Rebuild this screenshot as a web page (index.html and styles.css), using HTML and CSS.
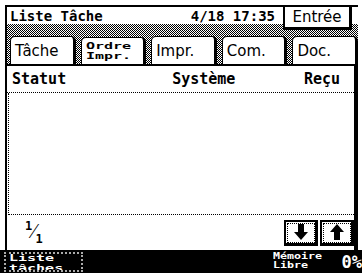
FILE: index.html
```html
<!DOCTYPE html>
<html lang="fr">
  <head>
    <meta charset="UTF-8" />
    <title>Liste Tâche</title>
    <link rel="stylesheet" href="styles.css">
  </head>
  <body>
    <div class="screen">
      <div class="title-bar">
        <span class="title">Liste Tâche</span>
        <span class="clock">4/18 17:35</span>
        <button class="enter-btn">Entrée</button>
      </div>

      <div class="tab-strip">
        <div class="tab">Tâche</div>
        <div class="tab tab-small"><span class="squash">Ordre<br />Impr.</span></div>
        <div class="tab">Impr.</div>
        <div class="tab">Com.</div>
        <div class="tab">Doc.</div>
      </div>

      <div class="panel">
        <div class="list-head">
          <span class="col-status">Statut</span>
          <span class="col-system">Système</span>
          <span class="col-recv">Reçu</span>
        </div>
        <div class="list-body"></div>
        <div class="pager">
          <span class="page-frac"><sup>1</sup>&frasl;<sub>1</sub></span>
          <div class="arrows">
            <button class="arrow-btn">
              <svg width="14" height="16" viewBox="0 0 14 16">
                <path d="M4 0h6v8h4l-7 8l-7-8h4z" fill="#000" />
              </svg>
            </button>
            <button class="arrow-btn">
              <svg width="14" height="16" viewBox="0 0 14 16">
                <path d="M4 16h6v-8h4l-7-8l-7 8h4z" fill="#000" />
              </svg>
            </button>
          </div>
        </div>
      </div>

      <div class="status-bar">
        <button class="jobs-btn"><span class="squash">Liste<br />tâches</span></button>
        <span class="mem-label"><span class="squash">Mémoire<br />Libre</span></span>
        <span class="mem-value">0%</span>
      </div>
    </div>
  </body>
</html>
```

FILE: styles.css
```css
body {
  margin: 0;
  background-color: #fff;
  color: #000;
  font-family: "DejaVu Sans Mono", monospace;
}
.screen {
  width: 362px;
  height: 273px;
  display: flex;
  flex-direction: column;
  overflow: hidden;
}
.title-bar {
  margin: 5px 4px 0 5px;
  height: 17px;
  border-top: 2px solid #000;
  border-left: 2px solid #000;
  display: flex;
  align-items: center;
  position: relative;
}
.title {
  margin-left: 3px;
  font-size: 14px;
  font-weight: bold;
}
.clock {
  margin-left: auto;
  margin-right: 83px;
  font-size: 14px;
  font-weight: bold;
}
.enter-btn {
  position: absolute;
  right: 6px;
  top: -2px;
  width: 69px;
  height: 25px;
  border: 2px solid #000;
  border-right-width: 3px;
  border-bottom-width: 3px;
  background-color: #fff;
  font-family: "DejaVu Sans", sans-serif;
  font-size: 15px;
  padding: 0;
  z-index: 1;
}
.tab-strip {
  margin: 0 4px 0 5px;
  height: 40px;
  border-left: 2px solid #000;
  display: flex;
  align-items: flex-end;
  gap: 5px;
  padding-left: 3px;
  background: repeating-conic-gradient(#000 0 25%, #fff 0 50%) 0 0 / 2px 2px;
}
.tab {
  flex: 1;
  height: 27px;
  background-color: #fff;
  border: 1px solid #000;
  border-right: 3px solid #000;
  border-bottom: none;
  border-radius: 5px 5px 0 0;
  display: flex;
  align-items: center;
  padding-left: 4px;
  font-family: "DejaVu Sans", sans-serif;
  font-size: 15px;
}
.tab-small {
  font-family: "DejaVu Sans Mono", monospace;
  font-weight: bold;
  align-items: flex-start;
  padding-top: 4px;
  box-sizing: border-box;
}
.panel {
  margin: 0 4px 0 5px;
  flex: 1;
  border-top: 2px solid #000;
  border-left: 2px solid #000;
  border-right: 4px solid #000;
  display: flex;
  flex-direction: column;
}
.list-head {
  height: 26px;
  display: flex;
  align-items: center;
  font-size: 15px;
  font-weight: bold;
  padding-left: 5px;
  border-bottom: 1px dotted #000;
}
.col-system {
  margin-left: 106px;
}
.col-recv {
  margin-left: auto;
  margin-right: 14px;
}
.list-body {
  flex: 1;
  border-left: 1px dotted #000;
  border-bottom: 1px dotted #000;
  margin-left: 1px;
}
.pager {
  height: 35px;
  display: flex;
  align-items: center;
}
.page-frac {
  margin-left: 18px;
  font-size: 20px;
  line-height: 20px;
}
.page-frac sup,
.page-frac sub {
  font-size: 12px;
  font-weight: bold;
}
.arrows {
  margin-left: auto;
  display: flex;
  gap: 2px;
}
.arrow-btn {
  width: 34px;
  height: 26px;
  border: 2px solid #000;
  border-right-width: 3px;
  border-bottom-width: 3px;
  outline: 1px dotted #000;
  outline-offset: -4px;
  background-color: #fff;
  padding: 0;
  display: flex;
  align-items: center;
  justify-content: center;
}
.status-bar {
  height: 23px;
  background-color: #000;
  color: #fff;
  display: flex;
  align-items: center;
  font-weight: bold;
}
.squash {
  display: inline-block;
  font-size: 12px;
  line-height: 14px;
  transform: scale(1.25, 0.68);
  transform-origin: left top;
  height: 19px;
}
.jobs-btn {
  margin-left: 4px;
  width: 79px;
  height: 20px;
  background-color: #000;
  color: #fff;
  border: 2px dotted #aaa;
  font-family: "DejaVu Sans Mono", monospace;
  font-weight: bold;
  text-align: left;
  padding: 0 0 0 3px;
  overflow: hidden;
  display: flex;
  align-items: flex-start;
}
.mem-label {
  margin-left: auto;
  height: 21px;
}
.mem-label .squash {
  font-size: 11px;
  line-height: 13px;
  transform: scale(1.06, 0.75);
}
.mem-value {
  margin-left: 22px;
  font-size: 17px;
}
```
